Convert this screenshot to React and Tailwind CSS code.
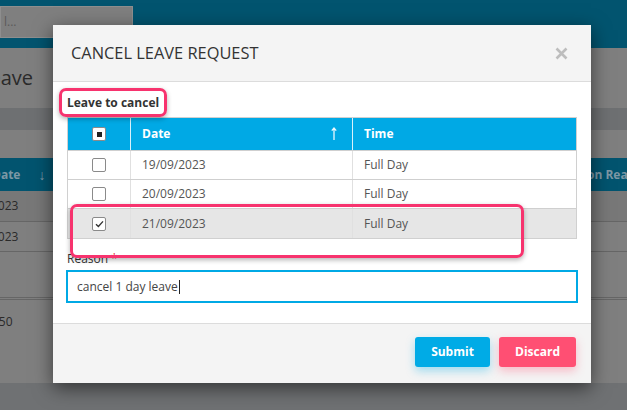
import React from "react";

function Box({ mode }) {
  // mode: "empty" | "checked" | "partial"
  return (
    <span className="inline-flex w-[14px] h-[14px] items-center justify-center bg-white border border-[#8a8a8a] rounded-[2px]">
      {mode === "partial" && <span className="w-[5px] h-[5px] bg-[#222]" />}
      {mode === "checked" && (
        <svg width="9" height="8" viewBox="0 0 9 8">
          <path d="M1 4.2 L3.4 6.4 L8 1.4" fill="none" stroke="#333" strokeWidth="1.4" />
        </svg>
      )}
    </span>
  );
}

const rows = [
  { date: "19/09/2023", time: "Full Day", checked: false },
  { date: "20/09/2023", time: "Full Day", checked: false },
  { date: "21/09/2023", time: "Full Day", checked: true },
];

export default function App() {
  return (
    <div className="relative w-[627px] h-[410px] overflow-hidden bg-[#7f7f7f] font-['Open_Sans',sans-serif] text-[#2b2b2b]">
      {/* page behind the dialog, already dimmed */}
      <div className="h-[48px] bg-[#02546f] pt-[6px]">
        <div className="w-[133px] h-[32px] bg-[#7f7f7f] border border-[#8e8e8e] flex items-center pl-[3px] text-[12px] text-[#5a5a5a]">
          l...
        </div>
      </div>
      <div className="h-[60px] flex items-center">
        <span className="-ml-[21px] text-[20px] text-[#2a2a2a]">Leave</span>
      </div>
      <div className="h-[22px] bg-[#6e7072]" />
      <div className="h-[28px]" />
      <div className="h-[33px] bg-[#02546f] flex items-center text-[12px] font-bold text-[#7d98a5]">
        <span className="-ml-[8px]">Date</span>
        <span className="ml-[18px] text-[14px] font-normal">↓</span>
        <span className="ml-auto mr-[-22px]">Cancellation Reason</span>
      </div>
      <div className="h-[31px] bg-[#787878] border-b border-[#666] flex items-center text-[12px] text-[#2a2a2a]">
        <span className="-ml-[9px]">2023</span>
      </div>
      <div className="h-[30px] border-b border-[#666] flex items-center text-[12px] text-[#2a2a2a]">
        <span className="-ml-[9px]">2023</span>
      </div>
      <div className="h-[48px] border-b-[3px] border-double border-[#666]" />
      <div className="h-[44px] flex items-center text-[12px] text-[#2a2a2a]">
        <span className="-ml-[8px]">150</span>
      </div>
      <div className="absolute left-0 right-0 bottom-0 h-[27px] bg-[#6f7173]" />

      {/* dialog */}
      <div className="absolute left-[53px] top-[25px] w-[538px] h-[358px] bg-white shadow-[0_5px_18px_rgba(0,0,0,0.55)] flex flex-col">
        <div className="h-[57px] shrink-0 bg-[#f4f4f4] border-b border-[#dcdcdc] flex items-center justify-between pl-[18px] pr-[23px]">
          <span className="text-[16.4px] text-[#333]">CANCEL LEAVE REQUEST</span>
          <svg width="13" height="13" viewBox="0 0 13 13">
            <path d="M1.5 1.5 L11.5 11.5 M11.5 1.5 L1.5 11.5" stroke="#bdbdbd" strokeWidth="2.6" />
          </svg>
        </div>

        <div className="flex-1 px-[14px] pt-[12px]">
          <div className="h-[18px] flex items-center text-[12px] font-bold text-[#333]">Leave to cancel</div>
          <div className="mt-[5px] w-[510px] border border-[#d0d0d0] text-[12px]">
            <div className="h-[32px] bg-[#00a9e5] flex text-white font-bold">
              <div className="w-[63px] flex items-center justify-center border-r border-[#d8f1fb]">
                <Box mode="partial" />
              </div>
              <div className="w-[222px] flex items-center pl-[11px] pr-[15px] border-r border-[#d8f1fb]">
                <span>Date</span>
                <svg className="ml-auto" width="6" height="14" viewBox="0 0 6 14">
                  <path d="M3 1 V13 M0.8 3.6 L3 1 L5.2 3.6" fill="none" stroke="#eaf7fd" strokeWidth="1.3" />
                </svg>
              </div>
              <div className="flex-1 flex items-center pl-[11px]">Time</div>
            </div>
            {rows.map((r) => (
              <div
                key={r.date}
                className={`flex text-[#555] border-t border-[#cfcfcf] ${r.checked ? "bg-[#e6e6e6] h-[30px]" : "bg-white h-[29px]"}`}
              >
                <div className="w-[63px] flex items-center justify-center border-r border-[#e0e0e0]">
                  <Box mode={r.checked ? "checked" : "empty"} />
                </div>
                <div className="w-[222px] flex items-center pl-[11px] border-r border-[#e0e0e0]">{r.date}</div>
                <div className="flex-1 flex items-center pl-[11px]">{r.time}</div>
              </div>
            ))}
          </div>

          <div className="mt-[12px] h-[16px] flex items-center text-[12px] text-[#333]">
            Reason <span className="ml-[3px] text-[#e0312f]">*</span>
          </div>
          <div className="mt-[3px] -ml-[1px] w-[512px] h-[33px] border-2 border-[#00a9e5] flex items-center pl-[9px] text-[12px] text-[#444]">
            cancel 1 day leave
            <span className="ml-[1px] w-px h-[14px] bg-[#222]" />
          </div>
        </div>

        <div className="h-[60px] shrink-0 bg-[#f4f4f4] border-t border-[#dcdcdc] flex items-start justify-end gap-[9px] pt-[13px] pr-[15px]">
          <button className="w-[75px] h-[30px] rounded-[3px] bg-[#00abe6] text-white text-[12px] font-bold shadow-[0_4px_10px_rgba(0,171,230,0.35)]">
            Submit
          </button>
          <button className="w-[77px] h-[30px] rounded-[3px] bg-[#ff4f73] text-white text-[12px] font-bold shadow-[0_4px_10px_rgba(255,79,115,0.35)]">
            Discard
          </button>
        </div>

        {/* annotation highlights */}
        <div className="absolute left-[6px] top-[63px] w-[108px] h-[29px] border-[3px] border-[#f7336e] rounded-[7px] shadow-[0_2px_5px_rgba(0,0,0,0.3)]" />
        <div className="absolute left-[17px] top-[179px] w-[454px] h-[54px] border-[3px] border-[#f7336e] rounded-[7px] shadow-[0_2px_5px_rgba(0,0,0,0.3)]" />
      </div>
    </div>
  );
}
